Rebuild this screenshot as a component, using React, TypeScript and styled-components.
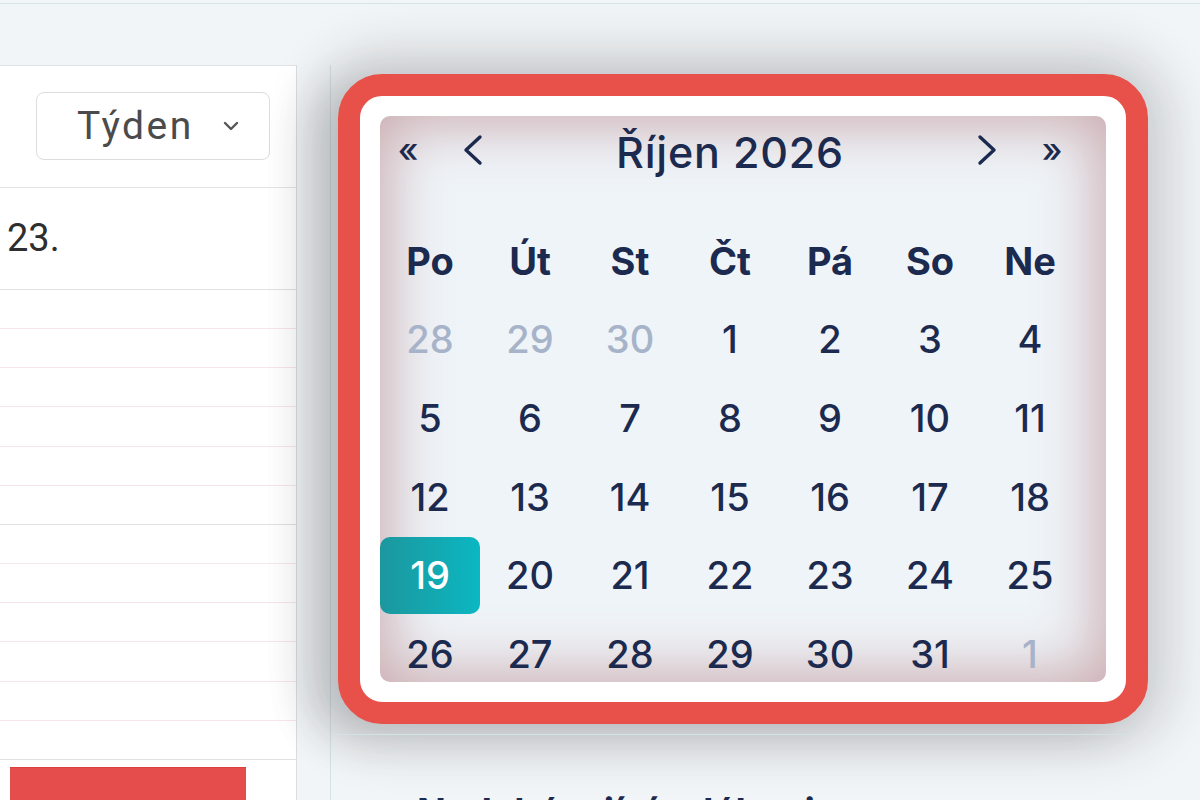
import React from 'react';
import styled, {createGlobalStyle} from 'styled-components';

const GlobalStyle = createGlobalStyle`
    html, body {
        margin: 0;
        background: #f2f5f7;
    }
    body {
        font-family: Inter, "Noto Sans", sans-serif;
        overflow: hidden;
    }
`;

const WEEKDAYS = ['Po', 'Út', 'St', 'Čt', 'Pá', 'So', 'Ne'];
const TODAY = 19;

type Day = {num: number, muted: boolean};

// October 2026 starts on a Thursday, so three September days lead the grid
const buildDays = (): Day[] => {
    const days: Day[] = [];
    [28, 29, 30].forEach(num => days.push({num, muted: true}));
    for (let d = 1; d <= 31; d++) days.push({num: d, muted: false});
    days.push({num: 1, muted: true});
    return days;
};

const Page = styled.div`
    height: 800px;
    padding-top: 3px;
    box-sizing: border-box;
    overflow: hidden;
`;

const TopRule = styled.div`
    border-top: 1px solid #d5e4e7;
`;

const Main = styled.div`
    display: flex;
    align-items: flex-start;
    margin-top: 61px;
    height: 740px;
`;

const DayPanel = styled.div`
    width: 296px;
    height: 100%;
    flex-shrink: 0;
    background: #fff;
    border-top: 1px solid #dfe3e6;
    border-right: 1px solid #dadde0;
    font-family: Roboto, "Liberation Sans", sans-serif;
`;

const PanelHead = styled.div`
    height: 122px;
    box-sizing: border-box;
    display: flex;
    justify-content: flex-end;
    align-items: flex-start;
    padding: 26px 26px 0 0;
    border-bottom: 1px solid #e2e4e6;
`;

const ViewSelect = styled.div`
    width: 234px;
    height: 68px;
    box-sizing: border-box;
    border: 1px solid #dcdde0;
    border-radius: 8px;
    display: flex;
    align-items: center;
    gap: 28px;
    padding-left: 40px;
    color: #4b4b4b;
    font-size: 39px;
    letter-spacing: 2.5px;
`;

const DateHead = styled.div`
    height: 102px;
    box-sizing: border-box;
    display: flex;
    align-items: center;
    padding: 0 0 2px 7px;
    border-bottom: 1px solid #dfe1e3;
    color: #2e2e2e;
    font-size: 38px;
`;

const Slot = styled.div<{$hour: boolean}>`
    height: 39.17px;
    box-sizing: border-box;
    border-bottom: 1px solid ${p => p.$hour ? '#dfe1e3' : '#f7e6e8'};
`;

const EventBar = styled.div`
    margin: 7px 0 0 10px;
    width: 236px;
    height: 40px;
    background: #e44d4b;
    border-top: 1px solid #d8413f;
`;

const Gutter = styled.div`
    width: 33px;
    flex-shrink: 0;
`;

const SideColumn = styled.div`
    width: 800px;
    height: 100%;
    flex-shrink: 0;
    border-left: 1px solid #d6e4e7;
    padding: 9px 0 0 7px;
    box-sizing: border-box;
`;

const Highlight = styled.div`
    width: 810px;
    height: 650px;
    box-sizing: border-box;
    border: 22px solid #e8514a;
    border-radius: 44px;
    padding: 20px;
    background: #fff;
    box-shadow:
        0 0 50px 22px rgba(40, 40, 50, 0.19),
        -30px 12px 44px 0 rgba(40, 40, 50, 0.14);
`;

const Calendar = styled.div`
    height: 566px;
    border-radius: 10px;
    background: #eff4f8;
    box-shadow: inset 0 0 56px 10px rgba(170, 105, 110, 0.5);
    overflow: hidden;
    color: #1b2a4e;
`;

const NavBar = styled.div`
    width: 700px;
    height: 72px;
    display: grid;
    grid-template-columns: 56px 74px 1fr 74px 56px;
    align-items: center;
`;

const NavButton = styled.div`
    display: flex;
    justify-content: center;
    align-items: center;
    font-size: 34px;
    font-weight: 500;
    line-height: 1;
    padding-bottom: 4px;
`;

const Title = styled.div`
    text-align: center;
    font-size: 43px;
    font-weight: 550;
    letter-spacing: 0.8px;
`;

const Grid = styled.div`
    width: 700px;
    display: grid;
    grid-template-columns: repeat(7, 100px);
    grid-auto-rows: 78.75px;
`;

const WeekRow = styled(Grid)`
    margin-top: 34px;
`;

const WeekDay = styled.div`
    display: flex;
    justify-content: center;
    align-items: center;
    font-size: 38px;
    font-weight: 700;
`;

const DayCell = styled.div<{$muted: boolean, $today: boolean}>`
    display: flex;
    justify-content: center;
    align-items: center;
    font-size: 38px;
    font-weight: 500;
    border-radius: 10px;
    margin: 0 0 2px;
    color: ${p => p.$today ? '#fff' : p.$muted ? '#a7b3c9' : '#1b2a4e'};
    background: ${p => p.$today ? 'linear-gradient(90deg, #1c979e, #0bb7c2)' : 'transparent'};
`;

const ListSection = styled.div`
    margin: 10px 0 0 -7px;
    border-top: 1px solid #d3e2e5;
    padding: 54px 0 0 86px;
    font-size: 38px;
    font-weight: 700;
    color: #1b2a4e;
`;

const Chevron = ({dir}: {dir: 'left' | 'right'}) => (
    <svg width="24" height="32" viewBox="0 0 24 32" fill="none">
        <polyline
            points={dir === 'left' ? '19,3 5,16 19,29' : '5,3 19,16 5,29'}
            stroke="#1b2a4e" strokeWidth="3.4" strokeLinecap="round" strokeLinejoin="round"/>
    </svg>
);

const SelectArrow = () => (
    <svg width="18" height="12" viewBox="0 0 18 12" fill="none">
        <polyline points="3,3 9,9 15,3" stroke="#555" strokeWidth="2.4" strokeLinecap="round" strokeLinejoin="round"/>
    </svg>
);

export default function App() {
    const days = buildDays();
    const slots = Array.from({length: 12}, (_, i) => i);

    return (
        <Page>
            <GlobalStyle/>
            <TopRule/>
            <Main>
                <DayPanel>
                    <PanelHead>
                        <ViewSelect>
                            <span>Týden</span>
                            <SelectArrow/>
                        </ViewSelect>
                    </PanelHead>
                    <DateHead>23.</DateHead>
                    {slots.map(i => <Slot key={i} $hour={i % 6 === 5}/>)}
                    <EventBar/>
                </DayPanel>
                <Gutter/>
                <SideColumn>
                    <Highlight>
                        <Calendar>
                            <NavBar>
                                <NavButton>«</NavButton>
                                <NavButton><Chevron dir="left"/></NavButton>
                                <Title>Říjen 2026</Title>
                                <NavButton><Chevron dir="right"/></NavButton>
                                <NavButton>»</NavButton>
                            </NavBar>
                            <WeekRow>
                                {WEEKDAYS.map(w => <WeekDay key={w}>{w}</WeekDay>)}
                            </WeekRow>
                            <Grid>
                                {days.map((d, i) => (
                                    <DayCell key={i} $muted={d.muted} $today={!d.muted && d.num === TODAY}>
                                        {d.num}
                                    </DayCell>
                                ))}
                            </Grid>
                        </Calendar>
                    </Highlight>
                    <ListSection>Nadcházející události</ListSection>
                </SideColumn>
            </Main>
        </Page>
    );
}
